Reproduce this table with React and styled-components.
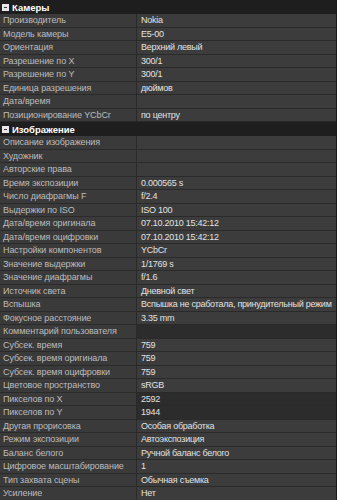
import React from 'react'
import styled, { createGlobalStyle } from 'styled-components'

const Global = createGlobalStyle`
  html, body {
    margin: 0;
    padding: 0;
    background: #1f1f1f;
  }
  body {
    font-family: "Liberation Sans", Arial, sans-serif;
    font-size: 9px;
  }
`

const sections = [
  {
    title: 'Камеры',
    rows: [
      ['Производитель', 'Nokia'],
      ['Модель камеры', 'E5-00'],
      ['Ориентация', 'Верхний левый'],
      ['Разрешение по X', '300/1'],
      ['Разрешение по Y', '300/1'],
      ['Единица разрешения', 'дюймов'],
      ['Дата/время', ''],
      ['Позиционирование YCbCr', 'по центру'],
    ],
  },
  {
    title: 'Изображение',
    rows: [
      ['Описание изображения', ''],
      ['Художник', ''],
      ['Авторские права', ''],
      ['Время экспозиции', '0.000565 s'],
      ['Число диафрагмы F', 'f/2.4'],
      ['Выдержки по ISO', 'ISO 100'],
      ['Дата/время оригинала', '07.10.2010 15:42:12'],
      ['Дата/время оцифровки', '07.10.2010 15:42:12'],
      ['Настройки компонентов', 'YCbCr'],
      ['Значение выдержки', '1/1769 s'],
      ['Значение диафрагмы', 'f/1.6'],
      ['Источник света', 'Дневной свет'],
      ['Вспышка', 'Вспышка не сработала, принудительный режим'],
      ['Фокусное расстояние', '3.35 mm'],
      ['Комментарий пользователя', '', true],
      ['Субсек. время', '759'],
      ['Субсек. время оригинала', '759'],
      ['Субсек. время оцифровки', '759'],
      ['Цветовое пространство', 'sRGB'],
      ['Пикселов по X', '2592', true],
      ['Пикселов по Y', '1944', true],
      ['Другая прорисовка', 'Особая обработка'],
      ['Режим экспозиции', 'Автоэкспозиция'],
      ['Баланс белого', 'Ручной баланс белого'],
      ['Цифровое масштабирование', '1'],
      ['Тип захвата сцены', 'Обычная съемка'],
      ['Усиление', 'Нет'],
    ],
  },
]

function App() {
  return (
    <>
      <Global />
      <Grid>
        {sections.map((section) => (
          <Section key={section.title}>
            <Header>
              <Toggle />
              {section.title}
            </Header>
            {section.rows.map(([label, value, dim]) => (
              <Row key={label}>
                <Label>{label}</Label>
                <Value $dim={dim}>{value}</Value>
              </Row>
            ))}
          </Section>
        ))}
      </Grid>
    </>
  )
}

const Grid = styled.div`
  width: 337px;
  height: 500px;
  overflow: hidden;
  background: #1f1f1f;
  border-right: 1px solid #1a1a1a;
  box-sizing: border-box;
`

const Section = styled.div`
  display: flex;
  flex-direction: column;
`

const Header = styled.div`
  height: 14px;
  display: flex;
  align-items: center;
  gap: 3px;
  padding-left: 2px;
  background: #1e1e1e;
  color: #ffffff;
  font-weight: bold;
  font-size: 9.5px;
`

const Toggle = styled.span`
  width: 5px;
  height: 5px;
  background: #e8e8e8;
  border: 1px solid #e8e8e8;
  position: relative;
  &::after {
    content: '';
    position: absolute;
    left: 1px;
    right: 1px;
    top: 2px;
    height: 1px;
    background: #333;
  }
`

const Row = styled.div`
  display: grid;
  grid-template-columns: 136px 1fr;
  height: 13.5px;
  box-sizing: border-box;
  border-bottom: 1px solid #2a2a2a;
  background: #3a3a3a;
`

const Label = styled.div`
  padding-left: 3px;
  color: #bcbcbc;
  line-height: 12.5px;
  letter-spacing: -0.1px;
  white-space: nowrap;
  overflow: hidden;
`

const Value = styled.div`
  padding-left: 4px;
  color: #e2e2e2;
  line-height: 12.5px;
  letter-spacing: -0.25px;
  white-space: nowrap;
  overflow: hidden;
  border-left: 1px solid #2a2a2a;
  background: ${(p) => (p.$dim ? '#2c2c2c' : '#3c3c3c')};
`

export default App
